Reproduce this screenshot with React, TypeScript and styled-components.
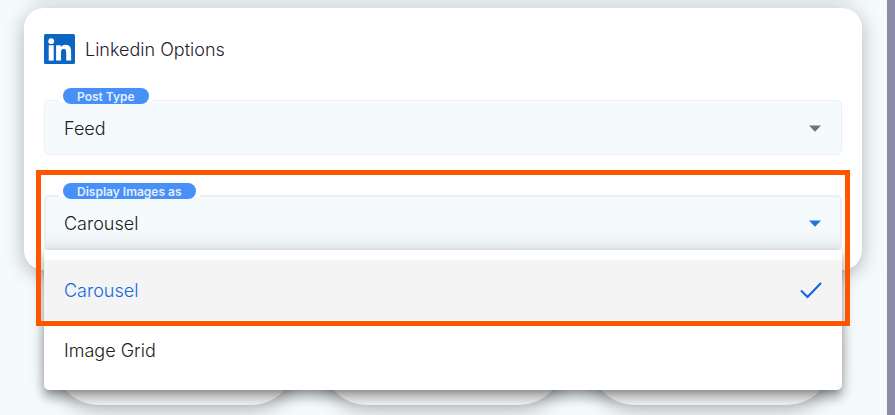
import React, { useState } from "react";
import styled, { createGlobalStyle } from "styled-components";

const GlobalStyle = createGlobalStyle`
  *, *::before, *::after { box-sizing: border-box; }
  body {
    margin: 0;
    background: #f5fafd;
    font-family: "Inter", "Liberation Sans", sans-serif;
    color: #212121;
  }
`;

const Page = styled.div`
  display: flex;
  min-height: 100vh;
`;

const Main = styled.main`
  flex: 1;
  min-width: 0;
  overflow: hidden;
  padding: 0 25px 10px 24px;
`;

const SideRail = styled.aside`
  width: 8px;
  background: #8b8ba5;
`;

const Card = styled.section`
  padding: 26px 20px 20px;
  border-radius: 20px;
  background: #fff;
  box-shadow: 0 4px 20px rgba(0, 0, 0, 0.28);
`;

const PreviousCard = styled.div`
  height: 40px;
  margin: -52px 0 20px;
  border-radius: 20px;
  background: #fff;
  box-shadow: 0 4px 20px rgba(0, 0, 0, 0.24);
`;

const CardHeader = styled.header`
  display: flex;
  align-items: center;
  gap: 10px;
  margin-bottom: 36px;
`;

const Logo = styled.svg`
  display: block;
  width: 31px;
  height: 30px;
`;

const Title = styled.h2`
  margin: 0;
  padding-top: 2px;
  font-size: 18px;
  font-weight: 300;
  line-height: 24px;
  color: #1d2130;
`;

const Fields = styled.div`
  display: grid;
  gap: 40px;
`;

const Field = styled.div`
  position: relative;
`;

const LabelNotch = styled.div`
  position: absolute;
  top: -12px;
  left: 15px;
  padding: 0 4px;
  background: linear-gradient(#fff, #fff) 0 12px / 100% 2px no-repeat;
`;

const FieldLabel = styled.label`
  display: block;
  height: 16px;
  padding: 0 14px;
  border-radius: 8px;
  background: #4690f7;
  color: #e4eefd;
  font-size: 12px;
  font-weight: 600;
  line-height: 17px;
`;

const Select = styled.select<{ $open?: boolean }>`
  display: block;
  appearance: none;
  width: 100%;
  height: 55px;
  padding: 2px 48px 0 ${(p) => (p.$open ? "18px" : "19px")};
  border: ${(p) => (p.$open ? "2px" : "1px")} solid #eaf0f4;
  border-radius: 5px;
  background: ${(p) =>
    p.$open ? "linear-gradient(#f5fafd 60%, #eef2f5)" : "#f5fafd"};
  color: #212121;
  font-family: inherit;
  font-size: 18px;
  font-weight: 300;
  outline: none;
`;

const Arrow = styled.svg<{ $open?: boolean }>`
  position: absolute;
  top: 25px;
  right: 21px;
  width: 12px;
  height: 7px;
  fill: ${(p) => (p.$open ? "#1f74ea" : "#707375")};
  pointer-events: none;
`;

const Menu = styled.div`
  position: absolute;
  z-index: 2;
  top: 100%;
  left: 0;
  right: 0;
  padding: 10px 0;
  border-radius: 0 0 5px 5px;
  background: #fff;
  box-shadow:
    0 5px 5px -3px rgba(0, 0, 0, 0.2),
    0 8px 10px 1px rgba(0, 0, 0, 0.18),
    0 3px 14px 2px rgba(0, 0, 0, 0.16);
`;

const Option = styled.button<{ $selected: boolean }>`
  display: flex;
  align-items: center;
  justify-content: space-between;
  width: 100%;
  height: 60px;
  padding: 0 20px;
  border: 0;
  background: ${(p) => (p.$selected ? "#f4f4f4" : "#fff")};
  color: ${(p) => (p.$selected ? "#1068e3" : "#212121")};
  font-family: inherit;
  font-size: 18px;
  font-weight: 300;
  text-align: left;
`;

const Check = styled.svg`
  width: 22px;
  height: 18px;
  fill: none;
  stroke: #0b63e5;
  stroke-width: 2;
`;

const Highlight = styled.div`
  position: absolute;
  z-index: 3;
  top: -25px;
  right: -8px;
  bottom: -76px;
  left: -8px;
  border: 5px solid #ff5500;
  pointer-events: none;
`;

const Tiles = styled.div`
  display: grid;
  grid-template-columns: repeat(3, 1fr);
  gap: 26px;
  margin-top: 24px;
  padding: 0 30px;
`;

const Tile = styled.div`
  height: 111px;
  border-radius: 45px;
  background: #f3f3f3;
  box-shadow: 0 4px 20px rgba(0, 0, 0, 0.3);
`;

const DropArrow = ({ open }: { open?: boolean }) => (
  <Arrow $open={open} viewBox="0 0 12 7" aria-hidden="true">
    <path d="M0 0.5h12L6 6.7z" />
  </Arrow>
);

const displayModes = ["Carousel", "Image Grid"];

export default function App() {
  const [mode, setMode] = useState("Carousel");

  return (
    <>
      <GlobalStyle />
      <Page>
        <Main>
          <PreviousCard />
          <Card>
            <CardHeader>
              <Logo viewBox="0 0 31 30" aria-hidden="true">
                <rect width="31" height="30" rx="1.5" fill="#0a66c2" />
                <g fill="#fff">
                  <circle cx="7.2" cy="7.2" r="2.9" />
                  <path d="M4.7 11.2h5v15.4h-5z" />
                  <path d="M12.1 11.2h4.7v2.1c.7-1.3 2.3-2.5 4.6-2.5 4.8 0 5.7 3.1 5.7 7.2v8.6h-4.9v-7.5c0-1.9 0-4.1-2.5-4.1s-2.7 1.9-2.7 4v7.6h-4.9z" />
                </g>
              </Logo>
              <Title>Linkedin Options</Title>
            </CardHeader>
            <Fields>
              <Field>
                <Select id="post-type" defaultValue="Feed">
                  <option>Feed</option>
                </Select>
                <DropArrow />
                <LabelNotch>
                  <FieldLabel htmlFor="post-type">Post Type</FieldLabel>
                </LabelNotch>
              </Field>
              <Field>
                <Select
                  id="display-images"
                  $open
                  value={mode}
                  onChange={(e) => setMode(e.target.value)}
                >
                  {displayModes.map((m) => (
                    <option key={m}>{m}</option>
                  ))}
                </Select>
                <DropArrow open />
                <LabelNotch>
                  <FieldLabel htmlFor="display-images">Display Images as</FieldLabel>
                </LabelNotch>
                <Menu role="listbox" aria-label="Display Images as">
                  {displayModes.map((m) => (
                    <Option
                      key={m}
                      type="button"
                      role="option"
                      aria-selected={m === mode}
                      $selected={m === mode}
                      onClick={() => setMode(m)}
                    >
                      {m}
                      {m === mode && (
                        <Check viewBox="0 0 22 18" aria-hidden="true">
                          <path d="M1 9.5l6.5 6.5L21 2" />
                        </Check>
                      )}
                    </Option>
                  ))}
                </Menu>
                <Highlight />
              </Field>
            </Fields>
          </Card>
          <Tiles>
            <Tile />
            <Tile />
            <Tile />
          </Tiles>
        </Main>
        <SideRail />
      </Page>
    </>
  );
}
